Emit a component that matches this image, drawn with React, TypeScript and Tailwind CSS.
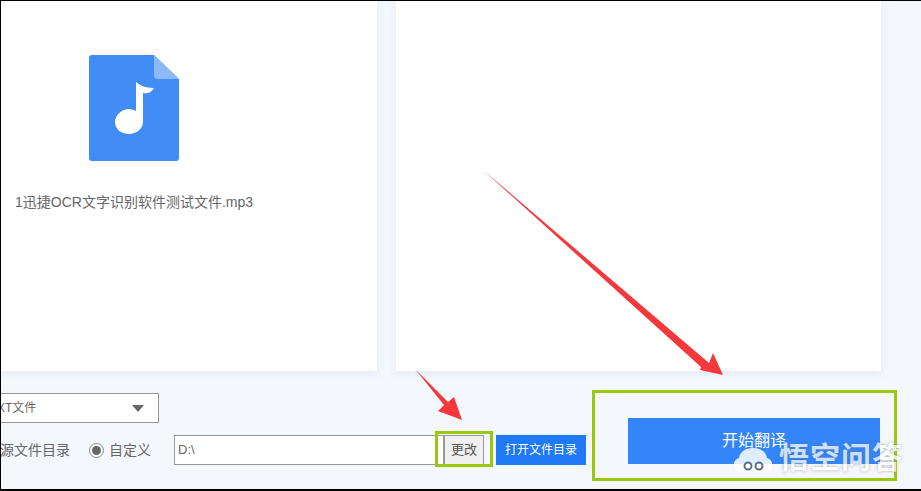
const cjk = "font-['Liberation_Sans','Noto_Sans_CJK_SC',sans-serif]";

function FileIcon() {
  return (
    <svg width="90" height="106" viewBox="0 0 90 106">
      <path d="M3 0H65L90 24V103a3 3 0 0 1-3 3H3a3 3 0 0 1-3-3V3a3 3 0 0 1 3-3z" fill="#418cf5" />
      <path d="M65 0L90 24H69a4 4 0 0 1-4-4z" fill="#8db9f9" />
      <path
        d="M47 27C50 30 57 33 65 33C62 38 58 39 54 38V67C54 74 47 79 40 79C32 79 26 74 26 67C26 60 33 54 40 54C43 54 45 55 47 56z"
        fill="#fff"
      />
    </svg>
  );
}

export default function App() {
  return (
    <div className={`relative flex h-[491px] w-[921px] flex-col overflow-hidden border-t border-b-2 border-l border-black bg-[#f4f7fb] ${cjk}`}>
      <div className="flex h-[370px] shrink-0">
        <div className="flex w-[376px] flex-col items-center bg-white pr-[110px] pt-[54px] shadow-[0_3px_8px_#e4ebf5]">
          <FileIcon />
          <div className="mt-[31px] whitespace-nowrap text-[14px] leading-5 text-[#666]">1迅捷OCR文字识别软件测试文件.mp3</div>
        </div>
        <div className="ml-[19px] w-[485px] bg-white shadow-[0_3px_8px_#e4ebf5]" />
      </div>

      <div className="flex flex-1">
        <div className="w-[591px] pt-[22px]">
          <div className="flex h-[30px] w-[158px] items-center justify-between overflow-hidden border border-l-0 border-[#999] bg-white pr-[14px] text-[12px] text-[#666]">
            <span className="-ml-[4px]">XT文件</span>
            <span className="h-0 w-0 border-x-[6px] border-t-[7px] border-x-transparent border-t-[#666]" />
          </div>
          <div className="mt-[12px] flex h-[30px] items-center text-[14px] text-[#666]">
            <span className="-ml-[1px] w-[71px] overflow-hidden whitespace-nowrap">源文件目录</span>
            <span className="ml-[18px] flex h-[15px] w-[15px] items-center justify-center rounded-full border border-[#888] bg-white">
              <span className="h-[9px] w-[9px] rounded-full bg-[#666]" />
            </span>
            <span className="ml-[5px]">自定义</span>
            <div className="ml-[23px] flex h-[30px] w-[270px] items-center border border-[#999] bg-white pl-[3px] text-[13px]">D:\</div>
            <button className="h-[30px] w-[40px] border border-[#999] bg-[#f0f0f0] text-[13px] text-[#555]">更改</button>
            <button className="ml-[12px] h-[30px] w-[90px] bg-[#2079f5] text-[12px] text-white">打开文件目录</button>
          </div>
        </div>
        <div className="pl-[36px] pt-[47px]">
          <button className="h-[46px] w-[252px] bg-[#3486f8] text-[16px] text-white">开始翻译</button>
        </div>
      </div>

      {/* annotations drawn over the screenshot */}
      <div className="absolute left-[434px] top-[430px] h-[36px] w-[58px] border-[3px] border-[#9bc70f]" />
      <div className="absolute left-[591px] top-[389px] h-[91px] w-[305px] border-[3px] border-[#9bc70f]" />
      <svg className="absolute -left-px -top-px" width="921" height="491" viewBox="0 0 921 491">
        <path d="M483 170L709 363L713 353L723 375L700 370L701 367z" fill="#f5383c" />
        <path d="M415 369L448 402L454 397L462 420L438 411L444 405z" fill="#f5383c" />
      </svg>

      {/* watermark */}
      <div className="absolute left-[732px] top-[440px] flex items-center gap-[6px] text-white [text-shadow:0_0_3px_rgba(90,100,120,0.7)]">
        <svg className="mt-[5px]" width="40" height="28" viewBox="0 0 40 28">
          <path
            d="M20 2C12 2 7 6 6 12C2 13 0 17 1 21C2 25 5 26 9 26H31C35 26 38 25 39 21C40 17 38 13 34 12C33 6 28 2 20 2z"
            fill="#fff"
            fillOpacity="0.85"
          />
          <circle cx="15" cy="20" r="3.5" fill="#fff" stroke="#5f6f88" strokeWidth="2" />
          <circle cx="26" cy="20" r="3.5" fill="#fff" stroke="#5f6f88" strokeWidth="2" />
        </svg>
        <span className="text-[30px] font-bold leading-none tracking-[1px] opacity-75">悟空问答</span>
      </div>
    </div>
  );
}
